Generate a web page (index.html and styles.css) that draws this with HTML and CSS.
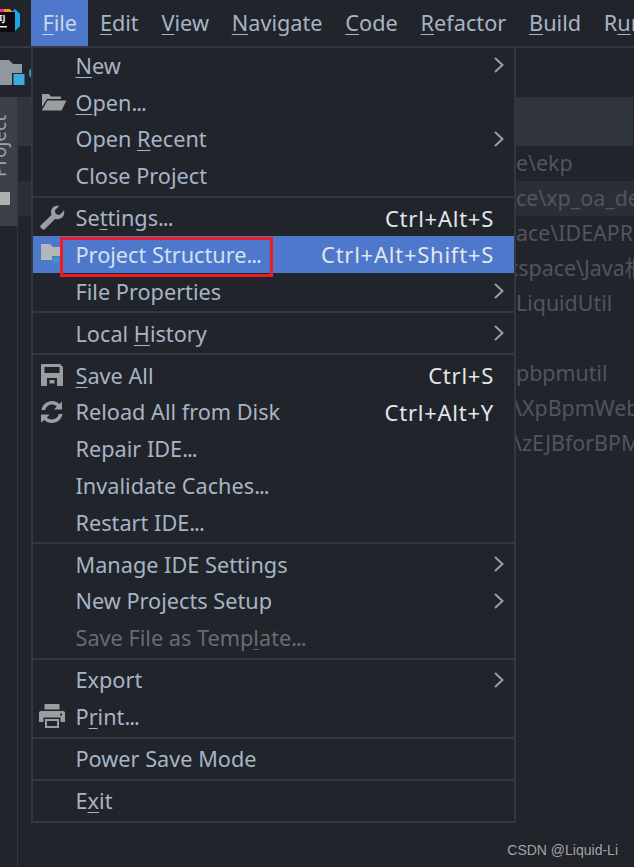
FILE: index.html
```html
<!DOCTYPE html>
<html lang="en">
<head>
    <meta charset="UTF-8">
    <meta name="viewport" content="width=device-width, initial-scale=1.0">
    <title>File menu</title>
    <link rel="stylesheet" href="styles.css">
</head>
<body>
    <div class="menubar">
        <svg class="logo" width="31" height="46" viewBox="0 0 31 46">
            <path d="M0 9 L9 9 L14 12 L0 16 Z" fill="#f0336e"/>
            <path d="M4 9 L10 9 L12 12 L4 12 Z" fill="#f7941d"/>
            <path d="M12 12 L15 9 L20 14 L20 26 L15 31 Z" fill="#17a8e8"/>
            <rect x="0" y="12" width="15" height="20" fill="#0c0a10"/>
            <text x="-1" y="21" class="logo-text">IJ</text>
            <rect x="0" y="26" width="7" height="1.5" fill="#e8e8e8"/>
        </svg>
        <div class="menubar-item active"><u>F</u>ile</div>
        <div class="menubar-item"><u>E</u>dit</div>
        <div class="menubar-item"><u>V</u>iew</div>
        <div class="menubar-item"><u>N</u>avigate</div>
        <div class="menubar-item"><u>C</u>ode</div>
        <div class="menubar-item"><u>R</u>efactor</div>
        <div class="menubar-item"><u>B</u>uild</div>
        <div class="menubar-item">R<u>u</u>n</div>
    </div>

    <div class="toolbar">
        <svg width="32" height="49" viewBox="0 0 32 49">
            <path d="M0 12 H9 L13 16 H22 V37 H0 Z" fill="#8f989e"/>
            <rect x="12" y="25" width="13" height="13" fill="#21242b"/>
            <rect x="13.5" y="26" width="11" height="11" fill="#3aade0"/>
            <path d="M31 21 Q29 25 31 29" stroke="#3b8fc4" stroke-width="2" fill="none"/>
        </svg>
    </div>

    <div class="workspace">
        <div class="sidebar">
            <div class="sidebar-tab">
                <span class="sidebar-label">Project</span>
                <span class="sidebar-icon"></span>
            </div>
        </div>
        <div class="project-list">
            <div class="list-header"><span class="list-header-cell"></span><span class="list-header-cell"></span></div>
            <div class="path-row">e\ekp</div>
            <div class="path-row selected">ce\xp_oa_dev</div>
            <div class="path-row">ace\IDEAPROJECT</div>
            <div class="path-row shift-left">xspace\Java框架</div>
            <div class="path-row">LiquidUtil</div>
            <div class="path-row"></div>
            <div class="path-row">pbpmutil</div>
            <div class="path-row shift-slash">\XpBpmWeb</div>
            <div class="path-row shift-slash">\zEJBforBPM</div>
        </div>
    </div>

    <div class="menu">
        <div class="menu-group first">
            <div class="menu-row">
                <span class="menu-icon"></span><span class="menu-label"><u>N</u>ew</span>
                <svg class="chevron" width="10" height="16" viewBox="0 0 10 16"><path d="M1 1 L8.5 8 L1 15"/></svg>
            </div>
            <div class="menu-row">
                <span class="menu-icon">
                    <svg class="icon-open" width="26" height="20" viewBox="0 0 26 20"><path d="M1 2 H8 L10 4.5 H20 V7 H6 L1 15 Z M6.5 8.5 H25.5 L20.5 18.5 H0.8 Z" fill="#9a9da1"/></svg>
                </span>
                <span class="menu-label"><u>O</u>pen<span class="dots">...</span></span>
            </div>
            <div class="menu-row">
                <span class="menu-icon"></span><span class="menu-label">Open <u>R</u>ecent</span>
                <svg class="chevron" width="10" height="16" viewBox="0 0 10 16"><path d="M1 1 L8.5 8 L1 15"/></svg>
            </div>
            <div class="menu-row">
                <span class="menu-icon"></span><span class="menu-label">Close Project</span>
            </div>
        </div>

        <div class="menu-group">
            <div class="menu-row">
                <span class="menu-icon">
                    <svg width="25" height="25" viewBox="0 0 25 25"><path d="M24 5.5 L19.5 10 L15.8 9 L14.8 5.3 L19.3 1 C15.5 -0.3 10.8 2.2 11 7.5 C11 8.5 11.2 9.3 11.5 10 L1 20 C0 21 0 22 1 23 L2 24 C3 25 4 25 5 24 L15 14 C20 15.5 25.5 11.5 24 5.5 Z" fill="#9a9da1"/></svg>
                </span>
                <span class="menu-label">Se<u>t</u>tings<span class="dots">...</span></span>
                <span class="shortcut">Ctrl+Alt+S</span>
            </div>
            <div class="menu-row highlighted">
                <span class="menu-icon">
                    <svg width="25" height="22" viewBox="0 0 25 22"><path d="M1 1 H10 L13 4 H22 V17 H1 Z" fill="#b3b6ba"/><rect x="12" y="13" width="9" height="8" fill="#4d78cc"/><rect x="13" y="14" width="6" height="6" fill="#3a97c4"/></svg>
                </span>
                <span class="menu-label">Project Structure<span class="dots">...</span></span>
                <span class="shortcut">Ctrl+Alt+Shift+S</span>
                <span class="red-box"></span>
            </div>
            <div class="menu-row">
                <span class="menu-icon"></span><span class="menu-label">File Properties</span>
                <svg class="chevron" width="10" height="16" viewBox="0 0 10 16"><path d="M1 1 L8.5 8 L1 15"/></svg>
            </div>
        </div>

        <div class="menu-group">
            <div class="menu-row">
                <span class="menu-icon"></span><span class="menu-label">Local <u>H</u>istory</span>
                <svg class="chevron" width="10" height="16" viewBox="0 0 10 16"><path d="M1 1 L8.5 8 L1 15"/></svg>
            </div>
        </div>

        <div class="menu-group">
            <div class="menu-row">
                <span class="menu-icon">
                    <svg width="22" height="22" viewBox="0 0 22 22"><path d="M0 1 Q0 0 1 0 H19 L22 3 V21 Q22 22 21 22 H1 Q0 22 0 21 Z M3.5 3 V9 H18.5 V3 Z M6 14 V22 H16 V14 Z M8.5 16 H13.5 V19.5 H8.5 Z" fill-rule="evenodd" fill="#9a9da1"/></svg>
                </span>
                <span class="menu-label"><u>S</u>ave All</span>
                <span class="shortcut">Ctrl+S</span>
            </div>
            <div class="menu-row">
                <span class="menu-icon">
                    <svg width="22" height="22" viewBox="0 0 22 22"><path d="M11 0 C14 0 16.500 1.200 18.300 3 L21 .5 V8.500 H13 L15.800 5.600 C14.600 4.300 13 3.600 11 3.600 C7.800 3.600 5 5.800 4.200 9 H.5 C1.400 3.800 5.700 0 11 0 Z M0 13.500 H8.500 L5.800 16.400 C7.100 17.700 8.900 18.400 11 18.400 C14.200 18.400 17 16.200 17.800 13 H21.500 C20.600 18.200 16.300 22 11 22 C8 22 5.400 20.800 3.500 19 L0 21.500 Z" fill="#9a9da1"/></svg>
                </span>
                <span class="menu-label">Reload All from Disk</span>
                <span class="shortcut">Ctrl+Alt+Y</span>
            </div>
            <div class="menu-row">
                <span class="menu-icon"></span><span class="menu-label">Repair IDE<span class="dots">...</span></span>
            </div>
            <div class="menu-row">
                <span class="menu-icon"></span><span class="menu-label">Invalidate Caches<span class="dots">...</span></span>
            </div>
            <div class="menu-row">
                <span class="menu-icon"></span><span class="menu-label">Restart IDE<span class="dots">...</span></span>
            </div>
        </div>

        <div class="menu-group">
            <div class="menu-row">
                <span class="menu-icon"></span><span class="menu-label">Manage IDE Settings</span>
                <svg class="chevron" width="10" height="16" viewBox="0 0 10 16"><path d="M1 1 L8.5 8 L1 15"/></svg>
            </div>
            <div class="menu-row">
                <span class="menu-icon"></span><span class="menu-label">New Projects Setup</span>
                <svg class="chevron" width="10" height="16" viewBox="0 0 10 16"><path d="M1 1 L8.5 8 L1 15"/></svg>
            </div>
            <div class="menu-row disabled">
                <span class="menu-icon"></span><span class="menu-label">Save File as Temp<u>l</u>ate<span class="dots">...</span></span>
            </div>
        </div>

        <div class="menu-group">
            <div class="menu-row">
                <span class="menu-icon"></span><span class="menu-label">Export</span>
                <svg class="chevron" width="10" height="16" viewBox="0 0 10 16"><path d="M1 1 L8.5 8 L1 15"/></svg>
            </div>
            <div class="menu-row">
                <span class="menu-icon">
                    <svg width="26" height="24" viewBox="0 0 26 24"><rect x="5.500" y="0" width="15" height="5.500" fill="#9a9da1"/><path d="M2 7 H24 Q26 7 26 9 V18 H21.500 V13.500 H4.500 V18 H0 V9 Q0 7 2 7 Z" fill="#9a9da1"/><path d="M6 15 H20 V24 H6 Z M8 17 V22 H18 V17 Z" fill-rule="evenodd" fill="#9a9da1"/><rect x="21" y="9.500" width="2" height="2" fill="#21242b"/></svg>
                </span>
                <span class="menu-label">P<u>r</u>int<span class="dots">...</span></span>
            </div>
        </div>

        <div class="menu-group">
            <div class="menu-row">
                <span class="menu-icon"></span><span class="menu-label">Power Save Mode</span>
            </div>
        </div>

        <div class="menu-group last">
            <div class="menu-row">
                <span class="menu-icon"></span><span class="menu-label">E<u>x</u>it</span>
            </div>
        </div>
    </div>

    <div class="watermark">CSDN @Liquid-Li</div>
</body>
</html>
```

FILE: styles.css
```css
body {
    margin: 0;
    width: 634px;
    height: 867px;
    overflow: hidden;
    position: relative;
    background-color: #21242b;
    font-family: "Noto Sans", "Noto Sans CJK SC", sans-serif;
    font-size: 21.700px;
    color: #a7b4c4;
}
u {
    text-decoration-thickness: 1px;
    text-underline-offset: 3px;
}
.menubar {
    display: flex;
    height: 46px;
    border-bottom: 2px solid #33373f;
    overflow: hidden;
}
.logo {
    flex: none;
}
.logo-text {
    font-size: 9px;
    font-weight: 700;
    fill: #f2f2f2;
}
.menubar-item {
    display: flex;
    align-items: center;
    padding: 0 11.400px 2px;
    white-space: nowrap;
}
.menubar-item.active {
    background-color: #4d78cc;
    color: #c9d6ea;
}
.toolbar {
    height: 49px;
}
.workspace {
    display: flex;
    height: 770px;
}
.sidebar {
    width: 17px;
    flex: none;
    border-right: 1px solid #33373f;
}
.sidebar-tab {
    height: 129px;
    background-color: #3b3f47;
    display: flex;
    flex-direction: column;
    overflow: hidden;
}
.sidebar-label {
    writing-mode: vertical-rl;
    transform: rotate(180deg);
    font-size: 19px;
    line-height: 20px;
    width: 20px;
    margin: 18px 0 0 -11px;
    color: #98a1ac;
}
.sidebar-icon {
    width: 10px;
    height: 13px;
    margin-top: 15px;
    background-color: #b0b0b0;
}
.project-list {
    flex: 1;
    overflow: hidden;
}
.list-header {
    display: flex;
    height: 49px;
    background-color: #2f343d;
}
.list-header-cell {
    width: 525px;
    border-right: 1px solid #21242b;
}
.path-row {
    height: 35px;
    line-height: 33px;
    font-size: 21.400px;
    padding-left: 498px;
    white-space: nowrap;
    color: #50555e;
}
.path-row.selected {
    background-color: #2b2e36;
}
.path-row.shift-left {
    padding-left: 489px;
}
.path-row.shift-slash {
    padding-left: 496px;
}
.menu {
    position: absolute;
    top: 46px;
    left: 31px;
    width: 481px;
    display: flex;
    flex-direction: column;
    background-color: #21242b;
    border: 2px solid #33373f;
    border-right-width: 2.500px;
}
.menu-group {
    padding: 1.700px 0;
    border-bottom: 2px solid #33373f;
}
.menu-group.first {
    padding-top: 0;
    margin-top: -1px;
}
.menu-group.last {
    border-bottom: none;
}
.menu-row {
    position: relative;
    display: flex;
    align-items: center;
    height: 36.730px;
    padding-right: 10px;
    white-space: nowrap;
}
.menu-row.highlighted {
    background-color: #4d78cc;
    color: #d5e0f0;
}
.menu-row.disabled {
    color: #686c72;
}
.menu-icon {
    width: 42.500px;
    flex: none;
    display: flex;
    justify-content: center;
    padding-right: 4.500px;
    box-sizing: border-box;
}
.icon-open {
    margin-left: 4px;
}
.dots {
    letter-spacing: -1px;
}
.shortcut {
    margin-left: auto;
    padding-right: 10px;
    font-size: 22px;
    letter-spacing: 0.750px;
    color: #e4e6e9;
}
.chevron {
    margin-left: auto;
    fill: none;
    stroke: #9a9da1;
    stroke-width: 2;
}
.red-box {
    position: absolute;
    top: 1px;
    left: 27px;
    width: 207px;
    height: 34px;
    border: 3px solid #ed1c24;
}
.watermark {
    position: absolute;
    right: 16px;
    bottom: 9px;
    font-family: "Liberation Sans", sans-serif;
    font-size: 14px;
    color: #a3a3a3;
}
```
